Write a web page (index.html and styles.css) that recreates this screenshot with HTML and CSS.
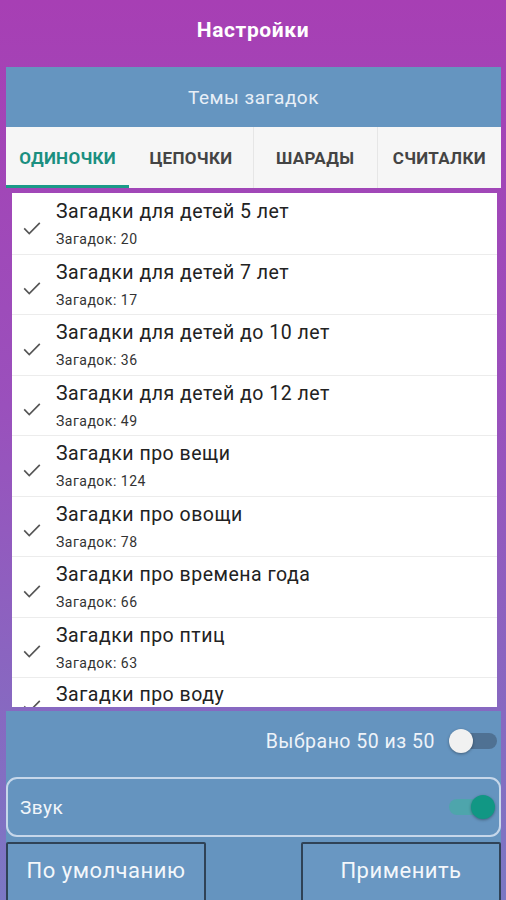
FILE: index.html
```html
<!DOCTYPE html>
<html lang="ru">
  <head>
    <meta charset="UTF-8" />
    <meta name="viewport" content="width=device-width, initial-scale=1.0" />
    <title>Настройки</title>
    <link rel="stylesheet" href="styles.css">
  </head>
  <body>
    <header class="topbar">Настройки</header>

    <section class="themes">
      <div class="themes-title">Темы загадок</div>
      <nav class="tabs">
        <div class="tab active">Одиночки</div>
        <div class="tab">Цепочки</div>
        <div class="tab">Шарады</div>
        <div class="tab">Считалки</div>
      </nav>

      <ul class="list">
        <li class="item">
          <svg class="check" viewBox="0 0 24 24"><path d="M3.5 12.5l5.5 5.5 11.5-11.5" /></svg>
          <div class="item-text">
            <div class="item-title">Загадки для детей 5 лет</div>
            <div class="item-sub">Загадок: 20</div>
          </div>
        </li>
        <li class="item">
          <svg class="check" viewBox="0 0 24 24"><path d="M3.5 12.5l5.5 5.5 11.5-11.5" /></svg>
          <div class="item-text">
            <div class="item-title">Загадки для детей 7 лет</div>
            <div class="item-sub">Загадок: 17</div>
          </div>
        </li>
        <li class="item">
          <svg class="check" viewBox="0 0 24 24"><path d="M3.5 12.5l5.5 5.5 11.5-11.5" /></svg>
          <div class="item-text">
            <div class="item-title">Загадки для детей до 10 лет</div>
            <div class="item-sub">Загадок: 36</div>
          </div>
        </li>
        <li class="item">
          <svg class="check" viewBox="0 0 24 24"><path d="M3.5 12.5l5.5 5.5 11.5-11.5" /></svg>
          <div class="item-text">
            <div class="item-title">Загадки для детей до 12 лет</div>
            <div class="item-sub">Загадок: 49</div>
          </div>
        </li>
        <li class="item">
          <svg class="check" viewBox="0 0 24 24"><path d="M3.5 12.5l5.5 5.5 11.5-11.5" /></svg>
          <div class="item-text">
            <div class="item-title">Загадки про вещи</div>
            <div class="item-sub">Загадок: 124</div>
          </div>
        </li>
        <li class="item">
          <svg class="check" viewBox="0 0 24 24"><path d="M3.5 12.5l5.5 5.5 11.5-11.5" /></svg>
          <div class="item-text">
            <div class="item-title">Загадки про овощи</div>
            <div class="item-sub">Загадок: 78</div>
          </div>
        </li>
        <li class="item">
          <svg class="check" viewBox="0 0 24 24"><path d="M3.5 12.5l5.5 5.5 11.5-11.5" /></svg>
          <div class="item-text">
            <div class="item-title">Загадки про времена года</div>
            <div class="item-sub">Загадок: 66</div>
          </div>
        </li>
        <li class="item">
          <svg class="check" viewBox="0 0 24 24"><path d="M3.5 12.5l5.5 5.5 11.5-11.5" /></svg>
          <div class="item-text">
            <div class="item-title">Загадки про птиц</div>
            <div class="item-sub">Загадок: 63</div>
          </div>
        </li>
        <li class="item item-cut">
          <svg class="check" viewBox="0 0 24 24"><path d="M3.5 12.5l5.5 5.5 11.5-11.5" /></svg>
          <div class="item-text">
            <div class="item-title">Загадки про воду</div>
          </div>
        </li>
      </ul>
    </section>

    <section class="bottom">
      <div class="selected-row">
        <span>Выбрано 50 из 50</span>
        <span class="switch"><span class="thumb"></span></span>
      </div>

      <div class="sound-box">
        <span>Звук</span>
        <span class="switch on"><span class="thumb"></span></span>
      </div>

      <div class="buttons">
        <button class="btn">По умолчанию</button>
        <button class="btn">Применить</button>
      </div>
    </section>
  </body>
</html>
```

FILE: styles.css
```css
body {
  margin: 0;
  height: 900px;
  overflow: hidden;
  font-family: Roboto, "Noto Sans", sans-serif;
  background: linear-gradient(180deg, #a73fb4 0%, #9a50bc 45%, #7b78c4 100%);
}

.topbar {
  height: 60px;
  line-height: 60px;
  text-align: center;
  color: #fff;
  font-size: 21px;
  font-weight: bold;
  letter-spacing: 0.6px;
}

.themes {
  margin: 7px 5px 0 6px;
}

.themes-title {
  height: 60px;
  line-height: 62px;
  text-align: center;
  background-color: #6595c0;
  color: #e8eff7;
  font-size: 19px;
  letter-spacing: 0.5px;
}

.tabs {
  display: flex;
  height: 61px;
  background-color: #f6f6f6;
}

.tab {
  flex: 1;
  display: flex;
  align-items: center;
  justify-content: center;
  text-transform: uppercase;
  font-size: 17px;
  font-weight: bold;
  letter-spacing: 0.3px;
  color: #444;
  box-sizing: border-box;
}

.tab:nth-child(n + 3) {
  border-left: 1px solid #e6e6e6;
}

.tab.active {
  color: #1b8f80;
  border-bottom: 3px solid #1b9a88;
  padding-top: 3px;
}

.list {
  list-style: none;
  margin: 5px 4px 0 6px;
  padding: 0;
  height: 514px;
  overflow: hidden;
  background-color: #fff;
}

.item {
  display: flex;
  align-items: center;
  height: 59.5px;
  border-top: 1px solid #ececec;
}

.item:first-child {
  border-top-color: #fff;
}

.check {
  width: 22px;
  height: 22px;
  margin: 8px 13px 0 9px;
  fill: none;
  stroke: #555;
  stroke-width: 1.8;
}

.item-title {
  font-size: 19.5px;
  letter-spacing: 0.5px;
  color: #222;
  line-height: 24px;
}

.item-sub {
  font-size: 14px;
  letter-spacing: 0.5px;
  color: #333;
  margin-top: 7px;
}

/* last row is cut by the list bottom */
.item-cut {
  align-items: flex-start;
}

.item-cut .check {
  margin-top: 17px;
}

.item-cut .item-text {
  padding-top: 5px;
}

.bottom {
  margin: 4px 5px 0 6px;
  height: 200px;
  background-color: #6594bf;
}

.selected-row {
  display: flex;
  align-items: center;
  justify-content: flex-end;
  height: 60px;
  padding: 0 4px 0 0;
  color: #eef3f9;
  font-size: 19.5px;
  letter-spacing: 0.5px;
}

.switch {
  position: relative;
  display: inline-block;
  width: 44px;
  height: 16px;
  margin-left: 18px;
  border-radius: 8px;
  background-color: #4f7193;
}

.switch .thumb {
  position: absolute;
  top: -4px;
  left: -4px;
  width: 24px;
  height: 24px;
  border-radius: 50%;
  background-color: #f1f1f1;
  box-shadow: 0 1px 3px rgba(0, 0, 0, 0.35);
}

.switch.on {
  background-color: #4ea5ac;
}

.switch.on .thumb {
  left: auto;
  right: -2px;
  background-color: #119784;
}

.sound-box {
  display: flex;
  align-items: center;
  justify-content: space-between;
  height: 56px;
  margin-top: 6px;
  padding: 0 6px 0 12px;
  border: 2px solid #c6d7ea;
  border-radius: 11px;
  color: #f2f6fa;
  font-size: 19px;
  letter-spacing: 0.5px;
}

.buttons {
  display: flex;
  justify-content: space-between;
  margin-top: 5px;
}

.btn {
  width: 200px;
  height: 62px;
  border: 2px solid #2f4256;
  border-radius: 2px;
  background-color: #6997c2;
  color: #f4f7fb;
  font-family: Roboto, "Noto Sans", sans-serif;
  font-size: 22px;
  letter-spacing: 0.5px;
  padding-bottom: 6px;
}
```
